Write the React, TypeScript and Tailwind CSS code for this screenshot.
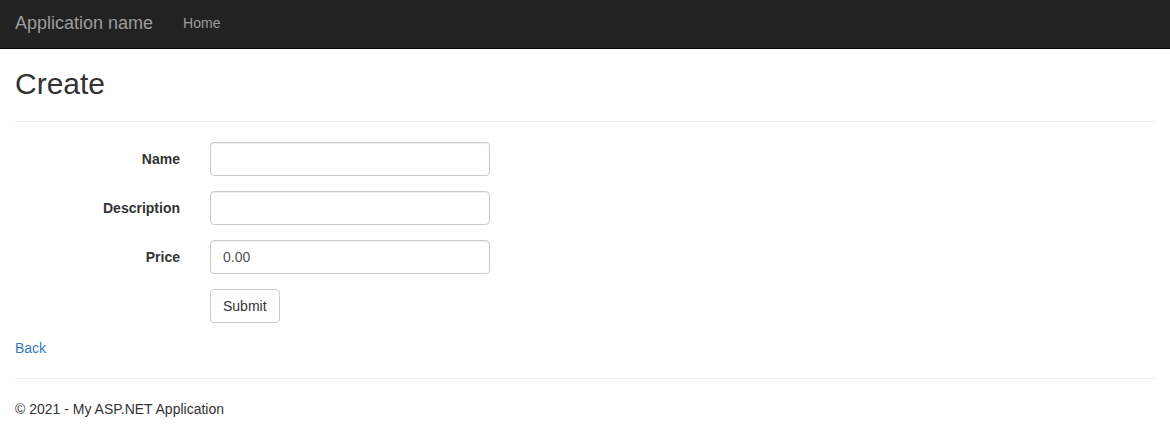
import React from 'react';

const fields = [
  { label: 'Name', value: '' },
  { label: 'Description', value: '' },
  { label: 'Price', value: '0.00' },
];

export default function App() {
  return (
    <div className="min-h-screen bg-white text-[14px] leading-[20px] text-[#333] font-['Liberation_Sans',Arial,sans-serif]">
      <nav className="h-[49px] bg-[#222] border-b border-[#080808] flex items-start">
        <a className="px-[15px] pt-[13px] text-[18px] leading-[20px] text-[#9d9d9d]" href="#">
          Application name
        </a>
        <a className="px-[15px] pt-[13px] leading-[20px] text-[#9d9d9d]" href="#">
          Home
        </a>
      </nav>

      <div className="px-[15px]">
        <h2 className="mt-[18px] text-[30px] leading-[33px] font-normal">Create</h2>
        <hr className="mt-[21px] mb-[20px] border-0 border-t border-[#eee]" />

        <div className="flex flex-col gap-[15px]">
          {fields.map(f => (
            <div key={f.label} className="flex items-start">
              <label className="w-[165px] pt-[7px] text-right font-bold">{f.label}</label>
              <input
                className="ml-[30px] w-[280px] h-[34px] px-[12px] py-[6px] text-[14px] text-[#555] bg-white border border-[#ccc] rounded-[4px] shadow-[inset_0_1px_1px_rgba(0,0,0,0.075)] outline-none"
                defaultValue={f.value}
              />
            </div>
          ))}
          <div className="flex">
            <button className="ml-[195px] h-[34px] px-[12px] py-[6px] text-[14px] leading-[20px] text-[#333] bg-white border border-[#ccc] rounded-[4px]">
              Submit
            </button>
          </div>
        </div>

        <div className="mt-[15px]">
          <a className="text-[#337ab7]" href="#">
            Back
          </a>
        </div>

        <hr className="mt-[20px] mb-[20px] border-0 border-t border-[#eee]" />
        <footer>
          <p>© 2021 - My ASP.NET Application</p>
        </footer>
      </div>
    </div>
  );
}
